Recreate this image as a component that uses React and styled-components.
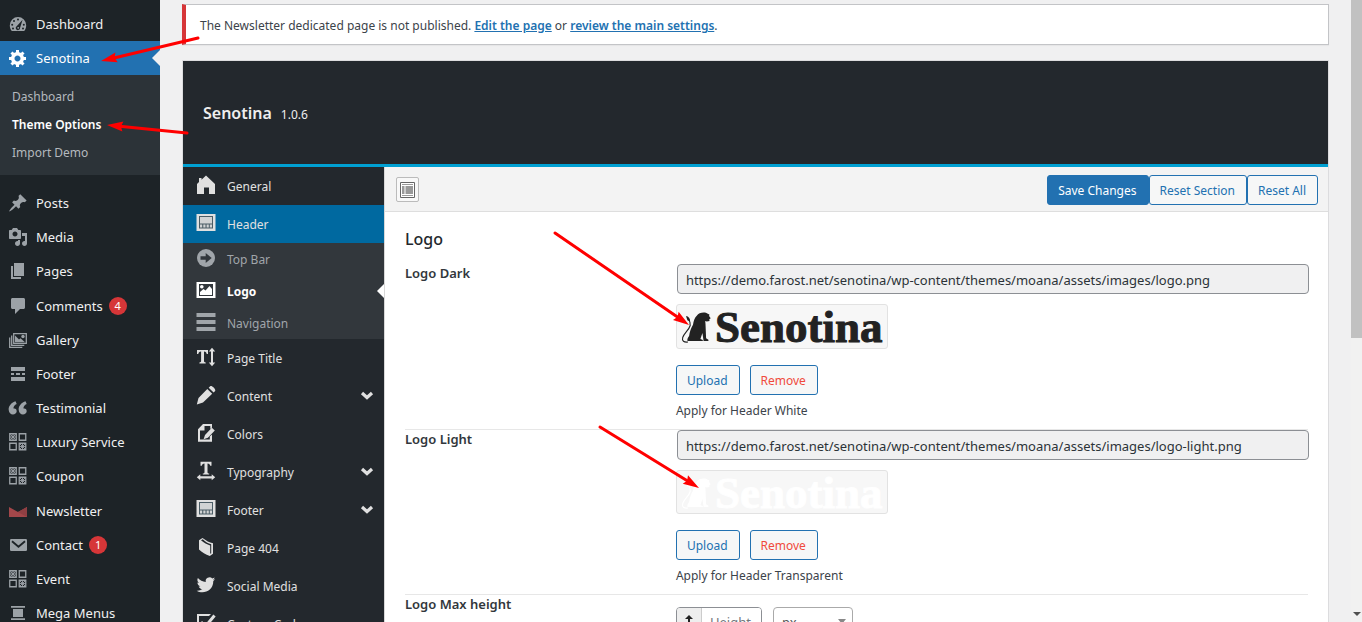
import { useState } from "react";
import styled, { createGlobalStyle, css } from "styled-components";

const GlobalStyle = createGlobalStyle`
  * {
    box-sizing: border-box;
  }
  body {
    margin: 0;
    background: #f0f0f1;
    color: #3c434a;
    font-family: "Noto Sans", "Open Sans", sans-serif;
    font-size: 12px;
    line-height: 18px;
  }
  button, input, select {
    font-family: inherit;
  }
`;

const Page = styled.div`
  position: relative;
  display: flex;
  height: 100vh;
  overflow: hidden;
`;

/* ---------- admin menu ---------- */

const AdminMenu = styled.nav`
  flex: 0 0 160px;
  padding-top: 7px;
  background: #1d2327;
`;

const MenuLink = styled.a`
  position: relative;
  display: flex;
  align-items: center;
  gap: 8px;
  height: ${(props) => (props.$tall ? "35px" : "34px")};
  padding-left: 8px;
  color: #f0f0f1;
  font-size: 13px;
  text-decoration: none;
  white-space: nowrap;

  svg {
    flex: none;
    color: #9ca2a7;
  }

  ${(props) =>
    props.$current &&
    css`
      background: #2271b1;
      color: #fff;

      svg {
        color: #fff;
      }

      &::after {
        content: "";
        position: absolute;
        right: 0;
        top: 9px;
        border: 8px solid transparent;
        border-right-color: #f0f0f1;
      }
    `}
`;

const Badge = styled.span`
  min-width: 18px;
  height: 18px;
  margin-left: -2px;
  border-radius: 9px;
  background: #d63638;
  color: #fff;
  font-size: 11px;
  text-align: center;
`;

const SubMenu = styled.div`
  margin-bottom: 11px;
  padding: 8px 0;
  background: #2c3338;
`;

const SubLink = styled.a`
  display: block;
  padding: 5px 12px;
  color: ${(props) => (props.$current ? "#fff" : "#b4b9be")};
  font-weight: ${(props) => (props.$current ? 600 : 400)};
  text-decoration: none;
`;

/* ---------- main column ---------- */

const Main = styled.main`
  flex: 1;
  min-width: 0;
  padding: 4px 22px 0;
`;

const Notice = styled.div`
  height: 41px;
  margin-bottom: 16px;
  padding: 12px 14px;
  border: 1px solid #c3c4c7;
  border-left: 4px solid #d63638;
  background: #fff;
  box-shadow: 0 1px 1px rgba(0, 0, 0, 0.04);

  a {
    color: #2271b1;
    font-weight: 600;
  }
`;

const Panel = styled.section`
  margin: 0 1px;
  box-shadow: 0 0 0 1px #dcdcde;
`;

const PanelHeader = styled.header`
  display: flex;
  align-items: baseline;
  gap: 9px;
  height: 106px;
  padding: 40px 20px 0;
  border-bottom: 3px solid #00a0d2;
  background: #23282d;
  color: #eee;

  h2 {
    margin: 0;
    font-size: 16px;
    font-weight: 600;
    line-height: 24px;
  }
`;

const PanelBody = styled.div`
  display: flex;
`;

const Sections = styled.nav`
  flex: 0 0 201px;
  background: #23282d;
`;

const SectionLink = styled.a`
  display: grid;
  grid-template-columns: 20px 1fr 14px;
  align-items: center;
  column-gap: 11px;
  height: 38px;
  padding: 2px 10px 0 13px;
  background: ${(props) => (props.$current ? "#0069a0" : "transparent")};
  color: #e0e0e0;
  text-decoration: none;

  svg {
    margin-bottom: 4px;
  }
`;

const SubSections = styled.div`
  background: #32373c;
`;

const SubSectionLink = styled(SectionLink)`
  position: relative;
  height: 32px;
  background: transparent;
  color: ${(props) => (props.$current ? "#fff" : "#a0a5aa")};
  font-weight: ${(props) => (props.$current ? 700 : 400)};

  &::after {
    content: "";
    display: ${(props) => (props.$current ? "block" : "none")};
    position: absolute;
    right: 0;
    top: 9px;
    border: 7px solid transparent;
    border-left-width: 0;
    border-right-color: #fff;
  }
`;

const Content = styled.div`
  flex: 1;
  min-width: 0;
  border-left: 1px solid #d8d8d8;
  background: #fff;
`;

const Toolbar = styled.div`
  display: flex;
  align-items: center;
  justify-content: space-between;
  height: 45px;
  padding: 1px 10px 0 11px;
  border-bottom: 1px solid #dedede;
  background: #f3f3f3;
`;

const IconButton = styled.button`
  display: flex;
  align-items: center;
  justify-content: center;
  width: 23px;
  height: 25px;
  padding: 0;
  border: 1px solid #bbb;
  border-radius: 2px;
  background: #f8f8f8;
  color: #666;
`;

const ButtonGroup = styled.div`
  display: flex;
  gap: ${(props) => props.$gap || "0"};
`;

const Button = styled.button`
  height: 30px;
  padding: 1px 11px 0 10px;
  border: 1px solid #2271b1;
  border-radius: 3px;
  background: ${(props) => (props.$primary ? "#2271b1" : "#f6f7f7")};
  color: ${(props) =>
    props.$primary ? "#fff" : props.$danger ? "#f04a3c" : "#2271b1"};
  font-size: 12px;
  cursor: pointer;
`;

const Fields = styled.div`
  padding: 16px 20px;

  h3 {
    margin: 0 0 13px;
    color: #23282d;
    font-size: 16px;
    font-weight: 500;
    line-height: 23px;
  }
`;

const Field = styled.div`
  display: grid;
  grid-template-columns: 3fr 7fr;
  border-bottom: 1px solid #e7e7e7;
`;

const FieldLabel = styled.label`
  color: #32373c;
  font-size: 13px;
  font-weight: 600;
`;

const FieldControl = styled.div`
  padding-bottom: 9px;
`;

const TextInput = styled.input`
  display: block;
  width: 100%;
  height: 30px;
  margin: 0 1px 10px;
  padding: 1px 8px 0;
  border: 1px solid #8c8f94;
  border-radius: 4px;
  background: #f0f0f1;
  color: #2c3338;
  font-size: 13px;
`;

const Preview = styled.div`
  width: fit-content;
  margin-bottom: 16px;
  border: 1px solid #e2e2e2;
  border-radius: 3px;
  background: #f7f7f7;
  color: ${(props) => props.$color};

  svg {
    display: block;
    overflow: visible;
  }
`;

const Hint = styled.p`
  margin: 7px 0 0;
`;

const Dimensions = styled.div`
  display: flex;
  gap: 11px;
  height: 42px;
  padding-top: 12px;
`;

const InputGroup = styled.div`
  display: flex;
  width: 86px;
  height: 30px;
  overflow: hidden;
  border: 1px solid #8c8f94;
  border-radius: 4px;

  span {
    display: flex;
    align-items: center;
    justify-content: center;
    width: 25px;
    border-right: 1px solid #ccc;
    background: #eee;
  }

  input {
    flex: 1;
    min-width: 0;
    padding: 0 8px;
    border: 0;
    font-size: 13px;
  }

  input::placeholder {
    color: #72777c;
  }
`;

const UnitSelect = styled.div`
  position: relative;
  width: 80px;

  select {
    width: 100%;
    height: 30px;
    padding: 0 8px;
    border: 1px solid #aaa;
    border-radius: 4px;
    background: #fff;
    color: #555;
    font-size: 13px;
    appearance: none;
  }

  &::after {
    content: "";
    position: absolute;
    right: 7px;
    top: 12px;
    border: 4px solid transparent;
    border-top: 5px solid #888;
    border-bottom: 0;
  }
`;

const ScrollTrack = styled.div`
  display: flex;
  flex: 0 0 11px;
  flex-direction: column;
  justify-content: space-between;
  align-items: center;
  background: #f1f1f1;
`;

const ScrollThumb = styled.div`
  width: 100%;
  height: 338px;
  background: #c1c1c1;
`;

const ScrollArrow = styled.div`
  margin-bottom: 6px;
  border: 4px solid transparent;
  border-top-color: #505050;
  border-bottom: 0;
`;

const Annotations = styled.svg`
  position: absolute;
  left: 0;
  top: 0;
  width: 100%;
  height: 100%;
  pointer-events: none;
`;

/* ---------- icons ---------- */

const Tile = ({ x, y, dots }) => (
  <>
    <path d={`M${x + 0.75} ${y + 0.75}h6.5v6.5h-6.5z`} fill="none" stroke="currentColor" strokeWidth="1.3" />
    {dots && (
      <path
        d={`M${x + 1.5} ${y + 1.5}l5 5m0-5l-5 5M${x + 4} ${y + 1}v6M${x + 1} ${y + 4}h6`}
        stroke="currentColor"
        strokeWidth="0.9"
      />
    )}
  </>
);

const icons = {
  dashboard: (
    <>
      <path d="M3.800 17h12.400c1.400-1.600 2-3.800 2-5.800A8.200 8.200 0 0 0 1.800 11.200c0 2 .6 4.200 2 5.800z" />
      <g fill="#1d2327">
        <circle cx="10" cy="5.400" r="1" />
        <circle cx="6" cy="7" r="1" />
        <circle cx="4.200" cy="10.800" r="1" />
        <circle cx="5" cy="14.400" r="1" />
        <circle cx="15.800" cy="10.800" r="1" />
        <circle cx="15" cy="14.400" r="1" />
        <path d="M14.600 5.800l-2.500 7.900a2.200 2.200 0 1 1-3.200-1.700z" />
      </g>
      <circle cx="10.200" cy="13.800" r=".9" />
    </>
  ),
  gear: (
    <path d="M18 12h-2.180c-.17.7-.44 1.350-.81 1.930l1.540 1.540-2.100 2.100-1.540-1.540c-.58.36-1.230.63-1.910.79V19H8v-2.180c-.68-.16-1.330-.43-1.910-.79l-1.540 1.540-2.120-2.120 1.540-1.540c-.36-.58-.63-1.230-.79-1.910H1V9.030h2.170c.16-.7.44-1.350.8-1.940L2.430 5.550l2.100-2.100 1.540 1.540c.58-.37 1.240-.64 1.930-.81V2h3v2.180c.68.16 1.330.43 1.910.79l1.540-1.540 2.120 2.120-1.540 1.540c.36.59.64 1.240.8 1.940H18V12zm-8.500 1.500c1.660 0 3-1.340 3-3s-1.340-3-3-3-3 1.340-3 3 1.340 3 3 3z" />
  ),
  pin: (
    <path d="M10.440 3.020l1.820-1.820 6.360 6.350-1.830 1.820c-1.050-.68-2.480-.57-3.410.36l-.75.75c-.92.93-1.040 2.350-.35 3.410l-1.830 1.820-2.410-2.410-2.800 2.790c-.42.42-3.380 2.710-3.800 2.290s1.860-3.390 2.280-3.810l2.790-2.790L4.100 9.360l1.830-1.820c1.050.69 2.480.57 3.400-.36l.75-.75c.93-.92 1.050-2.350.36-3.410z" />
  ),
  media: (
    <path d="M13 11V4c0-.55-.45-1-1-1h-1.670L9 1H5L3.670 3H2c-.55 0-1 .45-1 1v7c0 .55.45 1 1 1h10c.55 0 1-.45 1-1zM7 4.500c1.380 0 2.500 1.120 2.500 2.500S8.380 9.500 7 9.500 4.500 8.380 4.500 7 5.620 4.500 7 4.500zM14 6h5v10.500c0 1.380-1.120 2.500-2.500 2.500S14 17.880 14 16.500s1.120-2.500 2.500-2.500c.17 0 .34.02.5.05V9h-3V6zm-4 8.050V13h2v3.500c0 1.380-1.120 2.500-2.500 2.500S7 17.880 7 16.500 8.120 14 9.500 14c.17 0 .34.02.5.05z" />
  ),
  page: <path d="M6 15V2h10v13H6zm-1 1h8v2H3V5h2v11z" />,
  comment: (
    <path d="M4.500 2h11c.8 0 1.500.7 1.500 1.500v8c0 .8-.7 1.500-1.500 1.500H12l-5 5v-5H4.500c-.8 0-1.500-.7-1.500-1.500v-8C3 2.700 3.700 2 4.500 2z" />
  ),
  gallery: (
    <>
      <path
        d="M5.700 3.700h12.600v9.600H5.700zM3.700 5.500v9.800h12.600M1.700 7.500v9.800h12.600"
        fill="none"
        stroke="currentColor"
        strokeWidth="1.3"
      />
      <path d="M7 12.200V5.500l4 4 1.500-1.200L17 12.200z" />
      <circle cx="15" cy="6.500" r="1.700" />
    </>
  ),
  more: <path d="M17 7H3V3h14v4zM6 11H3V9h3v2zm6 0H8V9h4v2zm5 0h-3V9h3v2zm0 6H3v-4h14v4z" />,
  quote: (
    <path d="M8.700 13.200c0-.7-.2-1.400-.6-1.900-.6-.8-1.800-.9-2.600-.7-.3-1.700 1.100-3.800 3.200-4.600L7.500 3.200C4 4.200.2 7.700.7 12c.3 2.800 2 4.600 4.200 4.600 1 0 1.900-.3 2.600-1 .8-.6 1.200-1.400 1.200-2.400zm10 0c0-.7-.2-1.400-.6-1.900-.6-.8-1.800-.9-2.600-.7-.3-1.700 1.100-3.800 3.200-4.600l-1.200-2.800c-3.500 1-7.300 4.500-6.800 8.800.3 2.800 2 4.600 4.200 4.600 1 0 1.900-.3 2.600-1 .8-.6 1.200-1.400 1.200-2.400z" />
  ),
  tiles: (
    <>
      <Tile x={1} y={1} dots />
      <Tile x={10.5} y={1} />
      <Tile x={1} y={10.5} />
      <Tile x={10.5} y={10.5} dots />
    </>
  ),
  newsletter: (
    <>
      <path d="M1 6l9 5 9-5v10H1z" fill="#a3474a" />
      <path d="M19 6v10L10 11z" fill="#8f3f43" />
    </>
  ),
  mail: (
    <>
      <rect x="2" y="4" width="17" height="12" rx="1.200" />
      <path d="M4 6.200l6.500 5.600L17 6.200" fill="none" stroke="#1d2327" strokeWidth="1.8" />
    </>
  ),
  center: <path d="M3 4.700h14V3H3zM15 14V6H5v8zM3 17h14v-1.700H3z" />,
  home: <path d="M10 .5l9 8.500v10h-6v-6.500H8V19H1V9l2-1.900V3h2.500v1.700z" />,
  layout: (
    <>
      <path d="M.500 1h19v17H.500z" />
      <path d="M3 3h14v12.500H3z" fill="#0b2532" fillOpacity=".7" />
      <path d="M4 4h12v6.500H4zM4 11.500h2.200v3H4zM7.300 11.500h2.200v3H7.300zM10.600 11.500h2.200v3h-2.200zM13.800 11.500H16v3h-2.200z" fillOpacity=".9" />
    </>
  ),
  arrowCircle: (
    <>
      <circle cx="10" cy="10" r="9" />
      <path d="M4.500 8.200h5.200V5l6 5-6 5v-3.200H4.500z" fill="#32373c" />
    </>
  ),
  picture: (
    <>
      <path d="M.500 2h19v16H.500z" />
      <path d="M3 4h14v12H3z" fill="#32373c" />
      <circle cx="5.800" cy="6.800" r="1.800" />
      <path d="M4 15v-3l3.500-3 2 1.600L13.500 6l2.500 3v6z" />
    </>
  ),
  bars: <path d="M.500 1h19v4H.500zM.500 8h19v4H.500zM.500 15h19v4H.500z" />,
  textHeight: (
    <path d="M1 3h11v4h-1.300c-.2-1.500-.9-2.300-2.700-2.400V14c0 1 .7 1.300 1.700 1.400v1.100H3.400v-1.100c1-.1 1.700-.4 1.700-1.400V4.600C3.300 4.700 2.500 5.500 2.300 7H1zM16 .8l3.200 3.700H17v11h2.200L16 19.200l-3.200-3.700H15v-11h-2.200z" />
  ),
  pencil: (
    <path d="M14.200 1.300c1.400-1.400 6.200 3.200 4.900 4.700l-1.500 1.400-4.900-4.700zM11.300 4l4.900 4.800L7 17.600l-6.200 1.900 1.700-6.500z" />
  ),
  pageEdit: (
    <path d="M7 1h9v3.400l-1.700 1.500V3H8.500v4.500H4v9h9.800v-3l2.200-2v7.200H2V6.300zM15.800 4.800l3 2.600-6.900 7.300-4.300 1.500 1.400-4.300z" />
  ),
  textWidth: (
    <path d="M4.500.8h11v4h-1.300c-.2-1.500-1-2.300-2.700-2.400v8.800c0 1 .7 1.200 1.700 1.300v1.100H6.800v-1.100c1-.1 1.700-.3 1.700-1.300V2.400C6.700 2.500 6 3.300 5.800 4.800H4.500zM.8 16.300l3.500-3v1.900h11.400v-1.900l3.500 3-3.500 3v-1.900H4.300v1.900z" />
  ),
  book: (
    <path
      d="M3 3.200L6.500 1c3.500 2.700 7 4.600 10.500 5.200v10.600L13.800 19C9.500 17.700 6 15.200 3 12.500zm2 .1c3 2.600 6 4.100 9.200 5.100v8.400l1-.5V7.300c-3-.8-5.800-2.300-8.400-5z"
      fillRule="evenodd"
    />
  ),
  twitter: (
    <path d="M19.200 4.100c-.7.300-1.400.5-2.200.6.800-.5 1.400-1.200 1.700-2.100-.7.400-1.600.8-2.400.9a3.800 3.800 0 0 0-6.500 3.500C6.600 6.800 3.800 5.300 1.900 3c-1 1.700-.5 3.900 1.200 5.100-.6 0-1.200-.2-1.700-.5 0 1.800 1.300 3.400 3 3.800-.5.100-1.100.2-1.700.1.500 1.500 1.900 2.600 3.600 2.600A7.700 7.700 0 0 1 .7 15.700c5.400 3.500 16.600 1.500 16.600-9.700.7-.5 1.400-1.200 1.900-1.900z" />
  ),
  check: (
    <>
      <path d="M15 1H1v18h16v-7l-2 2v3H3V3h10z" />
      <path d="M5 9l4 5L18.500 2.500" fill="none" stroke="currentColor" strokeWidth="3" />
    </>
  ),
};

const Icon = ({ name, size = 20 }) => (
  <svg width={size} height={size} viewBox="0 0 20 20" fill="currentColor" fillRule="evenodd" aria-hidden="true">
    {icons[name]}
  </svg>
);

const Chevron = () => (
  <svg width="14" height="14" viewBox="0 0 14 14" aria-hidden="true">
    <path d="M2 5l5 4.500L12 5" fill="none" stroke="currentColor" strokeWidth="3.2" />
  </svg>
);

const LogoArt = ({ label, height }) => (
  <svg width="210" height={height} viewBox={`0 0 210 ${height}`} fill="currentColor" role="img" aria-label={label}>
    <path
      d="M20 10.500c1.500-3 8-4.200 10.800-1.800l1.600.9-.3 1.400 1.600 2.200-1.400 1 .2 1.900-2.700.4-1.600-.6.3 3 .6 14.400 2.300 1.400v1.400h-4.800l-1.200-8-2 5.800 2.400 1v1.200H10.500c-.5-2 .3-3.700 1.600-5.200.6-4 1.700-7.600 3.900-11.200.6-3.900 1.600-7 4-9.200z"
      fillRule="evenodd"
    />
    <path
      d="M11 37c-4 .5-6.300-1-5.300-4.500 1.500-4.500 6.300-7.500 7.500-12 .6-2.800-.4-4.500-1.700-6"
      fill="none"
      stroke="currentColor"
      strokeWidth="1.1"
    />
    <path d="M9 11c2.500.4 4.200 2.300 4.100 5.500l-2.700-1.300z" />
    <text
      x="38"
      y="37"
      fontFamily="'Liberation Serif', serif"
      fontSize="45"
      fontWeight="700"
      stroke="currentColor"
      strokeWidth="1"
    >
      Senotina
    </text>
  </svg>
);

const Arrow = ({ from, to }) => {
  const angle = Math.atan2(to[1] - from[1], to[0] - from[0]);
  const length = Math.hypot(to[0] - from[0], to[1] - from[1]);
  return (
    <g transform={`translate(${from[0]} ${from[1]}) rotate(${(angle * 180) / Math.PI})`}>
      <path d={`M0 0H${length - 10}`} stroke="#f00" strokeWidth="3" strokeLinecap="round" />
      <path d={`M${length} 0l-16-5 2 5-2 5z`} fill="#f00" />
    </g>
  );
};

/* ---------- data ---------- */

const menu = [
  { icon: "pin", label: "Posts" },
  { icon: "media", label: "Media" },
  { icon: "page", label: "Pages" },
  { icon: "comment", label: "Comments", count: 4, tall: true },
  { icon: "gallery", label: "Gallery" },
  { icon: "more", label: "Footer" },
  { icon: "quote", label: "Testimonial" },
  { icon: "tiles", label: "Luxury Service" },
  { icon: "tiles", label: "Coupon" },
  { icon: "newsletter", label: "Newsletter", tall: true },
  { icon: "mail", label: "Contact", count: 1 },
  { icon: "tiles", label: "Event" },
  { icon: "center", label: "Mega Menus" },
];

const headerSections = [
  { icon: "arrowCircle", label: "Top Bar" },
  { icon: "picture", label: "Logo", current: true },
  { icon: "bars", label: "Navigation" },
];

const sections = [
  { icon: "textHeight", label: "Page Title" },
  { icon: "pencil", label: "Content", more: true },
  { icon: "pageEdit", label: "Colors" },
  { icon: "textWidth", label: "Typography", more: true },
  { icon: "layout", label: "Footer", more: true },
  { icon: "book", label: "Page 404" },
  { icon: "twitter", label: "Social Media" },
  { icon: "check", label: "Custom Code" },
];

const arrows = [
  { from: [198, 38], to: [101, 61] },
  { from: [187, 133], to: [107, 125] },
  { from: [555, 233], to: [689, 325] },
  { from: [600, 427], to: [699, 488] },
];

const LogoField = ({ id, label, url, hint, color, logoHeight }) => {
  const [value, setValue] = useState(url);

  return (
    <Field>
      <FieldLabel htmlFor={id}>{label}</FieldLabel>
      <FieldControl>
        <TextInput id={id} type="text" value={value} onChange={(e) => setValue(e.target.value)} />
        <Preview $color={color}>
          <LogoArt label={label} height={logoHeight} />
        </Preview>
        <ButtonGroup $gap="10px">
          <Button type="button">Upload</Button>
          <Button type="button" $danger onClick={() => setValue("")}>
            Remove
          </Button>
        </ButtonGroup>
        <Hint>{hint}</Hint>
      </FieldControl>
    </Field>
  );
};

const App = () => {
  return (
    <Page>
      <GlobalStyle />

      <AdminMenu>
        <MenuLink href="#dashboard">
          <Icon name="dashboard" />
          Dashboard
        </MenuLink>
        <MenuLink href="#senotina" $current>
          <Icon name="gear" />
          Senotina
        </MenuLink>
        <SubMenu>
          <SubLink href="#theme">Dashboard</SubLink>
          <SubLink href="#options" $current>
            Theme Options
          </SubLink>
          <SubLink href="#import">Import Demo</SubLink>
        </SubMenu>
        {menu.map((item) => (
          <MenuLink key={item.label} href="#menu" $tall={item.tall}>
            <Icon name={item.icon} />
            {item.label}
            {item.count && <Badge>{item.count}</Badge>}
          </MenuLink>
        ))}
      </AdminMenu>

      <Main>
        <Notice>
          The Newsletter dedicated page is not published. <a href="#edit">Edit the page</a> or{" "}
          <a href="#settings">review the main settings</a>.
        </Notice>

        <Panel>
          <PanelHeader>
            <h2>Senotina</h2>
            <span>1.0.6</span>
          </PanelHeader>

          <PanelBody>
            <Sections>
              <SectionLink href="#general">
                <Icon name="home" />
                General
              </SectionLink>
              <SectionLink href="#header" $current>
                <Icon name="layout" />
                Header
              </SectionLink>
              <SubSections>
                {headerSections.map((item) => (
                  <SubSectionLink key={item.label} href="#section" $current={item.current}>
                    <Icon name={item.icon} />
                    {item.label}
                  </SubSectionLink>
                ))}
              </SubSections>
              {sections.map((item) => (
                <SectionLink key={item.label} href="#section">
                  <Icon name={item.icon} />
                  {item.label}
                  {item.more && <Chevron />}
                </SectionLink>
              ))}
            </Sections>

            <Content>
              <Toolbar>
                <IconButton type="button" aria-label="Expand options">
                  <svg width="15" height="16" viewBox="0 0 15 16">
                    <path d="M.5.5h14v15H.5z" fill="#fff" stroke="#666" />
                    <path d="M2 2.500h11M2 13.500h11" stroke="#999" />
                    <path d="M2 4h2.500v8H2zM5.500 4H13v8H5.500z" fill="#999" />
                  </svg>
                </IconButton>
                <ButtonGroup>
                  <Button type="button" $primary>
                    Save Changes
                  </Button>
                  <Button type="button">Reset Section</Button>
                  <Button type="button">Reset All</Button>
                </ButtonGroup>
              </Toolbar>

              <Fields>
                <h3>Logo</h3>
                <LogoField
                  id="logo-dark"
                  label="Logo Dark"
                  url="https://demo.farost.net/senotina/wp-content/themes/moana/assets/images/logo.png"
                  hint="Apply for Header White"
                  color="#222"
                  logoHeight={43}
                />
                <LogoField
                  id="logo-light"
                  label="Logo Light"
                  url="https://demo.farost.net/senotina/wp-content/themes/moana/assets/images/logo-light.png"
                  hint="Apply for Header Transparent"
                  color="#fff"
                  logoHeight={42}
                />
                <Field>
                  <FieldLabel htmlFor="logo-height">Logo Max height</FieldLabel>
                  <Dimensions>
                    <InputGroup>
                      <span>
                        <svg width="8" height="16" viewBox="0 0 8 16" aria-hidden="true">
                          <path d="M4 1l4 4H5v6h3l-4 4-4-4h3V5H0z" fill="#222" />
                        </svg>
                      </span>
                      <input id="logo-height" type="text" placeholder="Height" />
                    </InputGroup>
                    <UnitSelect>
                      <select aria-label="Unit" defaultValue="px">
                        <option>px</option>
                        <option>em</option>
                        <option>%</option>
                      </select>
                    </UnitSelect>
                  </Dimensions>
                </Field>
              </Fields>
            </Content>
          </PanelBody>
        </Panel>
      </Main>

      <ScrollTrack>
        <ScrollThumb />
        <ScrollArrow />
      </ScrollTrack>

      <Annotations aria-hidden="true">
        {arrows.map((arrow) => (
          <Arrow key={arrow.from.join()} from={arrow.from} to={arrow.to} />
        ))}
      </Annotations>
    </Page>
  );
};

export default App;
